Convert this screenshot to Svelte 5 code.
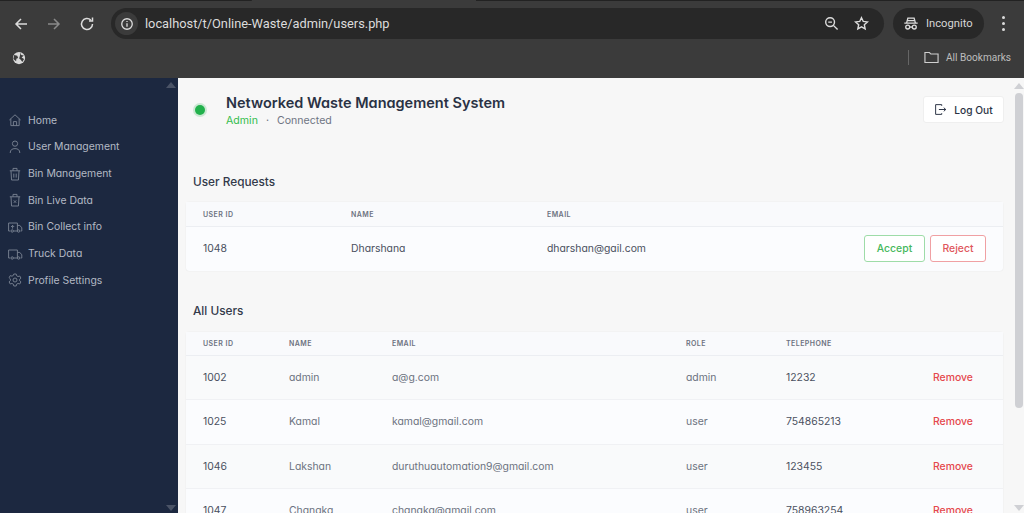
<script>
  const nav = [
    { label: 'Home', d: 'M3 10 10 3.500l7 6.500M4.800 8.500v8.500h10.400V8.500M8 17v-5h4v5' },
    { label: 'User Management', d: 'M10 2.500a3.300 3.300 0 1 0 0 6.600 3.300 3.300 0 0 0 0-6.600M4 17.500c0-4 2.500-5.500 6-5.500s6 1.500 6 5.500' },
    { label: 'Bin Management', d: 'M3.500 6h13M7.500 6V3h5v3M5 6l.7 11.500h8.600L15 6M8.500 9.500v5M11.500 9.500v5' },
    { label: 'Bin Live Data', d: 'M3.500 6h13M7.500 6V3h5v3M5 6l.7 11.500h8.600L15 6M8.500 10.500l3 3M11.500 10.500l-3 3' },
    { label: 'Bin Collect info', d: 'M4 15H2V5h11v10H8M13 8h3l2.500 3v4H17M5 15a1.500 1.500 0 1 0 3 0 1.500 1.500 0 0 0-3 0M13 15a1.500 1.500 0 1 0 3 0 1.500 1.500 0 0 0-3 0M5 10l2-2 2 2M7 8v4' },
    { label: 'Truck Data', d: 'M4 15H2V5h11v10H8M13 8h3l2.500 3v4H17M5 15a1.500 1.500 0 1 0 3 0 1.500 1.500 0 0 0-3 0M13 15a1.500 1.500 0 1 0 3 0 1.500 1.500 0 0 0-3 0' },
    { label: 'Profile Settings', d: 'M10 7.500a2.500 2.500 0 1 0 0 5 2.500 2.500 0 0 0 0-5M8.500 2.500h3l.5 2.200 1.800 1 2.100-.7 1.500 2.600-1.600 1.500v1.800l1.600 1.500-1.500 2.600-2.100-.7-1.800 1-.5 2.200h-3l-.5-2.200-1.800-1-2.100.7-1.500-2.600 1.600-1.500V8.600L2.600 7.100 4.100 4.500l2.100.7 1.800-1z' }
  ];
  const users = [
    ['1002', 'admin', 'a@g.com', 'admin', '12232'],
    ['1025', 'Kamal', 'kamal@gmail.com', 'user', '754865213'],
    ['1046', 'Lakshan', 'duruthuautomation9@gmail.com', 'user', '123455'],
    ['1047', 'Chanaka', 'chanaka@gmail.com', 'user', '758963254']
  ];
</script>

<div class="window">
  <header class="chrome">
    <div class="tabstrip"><span class="tab-a"></span><span class="tab-b"></span></div>
    <div class="toolbar">
      <svg class="tool" viewBox="0 0 16 16"><path d="M14 8H3M8 3 3 8l5 5" /></svg>
      <svg class="tool dim" viewBox="0 0 16 16"><path d="M2 8h11M8 3l5 5-5 5" /></svg>
      <svg class="tool" viewBox="0 0 16 16"><path d="M13.500 8a5.500 5.500 0 1 1-1.700-4M13.500 1.500V5H10" /></svg>
      <div class="omnibox">
        <span class="info"><svg viewBox="0 0 16 16"><circle cx="8" cy="8" r="6" /><path d="M8 7.200v4M8 4.600v1.200" /></svg></span>
        <span class="url">localhost/t/Online-Waste/admin/users.php</span>
        <svg class="zoomi" viewBox="0 0 16 16"><circle cx="6.500" cy="6.500" r="4.700" /><path d="M4.500 6.500h4M10 10l4.500 4.500" /></svg>
        <svg class="star" viewBox="0 0 16 16"><path d="m8 1.800 1.900 4 4.400.5-3.300 3 .9 4.400L8 11.500l-3.900 2.200.9-4.400-3.300-3 4.400-.5z" /></svg>
      </div>
      <div class="incog">
        <svg viewBox="0 0 18 16"><path d="M1.500 7.500h15M4 7.500 5.500 2h7L14 7.500M4.500 4.800h9" /><circle cx="5.300" cy="12" r="2.200" /><circle cx="12.700" cy="12" r="2.200" /><path d="M7.500 12h3" /></svg>
        <span>Incognito</span>
      </div>
      <div class="kebab"><i></i><i></i><i></i></div>
    </div>
    <div class="bookmarks">
      <svg class="globe" viewBox="0 0 16 16"><circle cx="8" cy="8" r="7" fill="#dadada" /><path d="M2.500 4.500 6 5.500 7 8l-2 .8-.3 3L1.500 9zM10 1.800l.5 2.700 3 .5L11 7.500l2.800 1.500-2 3.500L10 10 8.200 8.500z" fill="#3c3c3c" /></svg>
      <span class="spacer"></span>
      <span class="sep"></span>
      <svg class="folder" viewBox="0 0 16 13"><path d="M1 11.800V1.200h4.800l1.500 1.600H15v9z" /></svg>
      <span class="allb">All Bookmarks</span>
    </div>
  </header>

  <div class="body">
    <aside class="side">
      <span class="arrow up side-up"></span>
      <nav>
        {#each nav as item}
          <div class="nav-item">
            <svg viewBox="0 0 20 20"><path d={item.d} /></svg>
            <span>{item.label}</span>
          </div>
        {/each}
      </nav>
      <span class="arrow down side-down"></span>
    </aside>

    <main class="main">
      <div class="head">
        <span class="dot"></span>
        <div class="title">
          <h1>Networked Waste Management System</h1>
          <div class="sub"><span class="green">Admin</span><span class="mid">·</span><span>Connected</span></div>
        </div>
        <button class="logout">
          <svg viewBox="0 0 16 16"><path d="M9.500 3.500V2H2v12h7.500v-1.500M6 8h8.500M12 5.800 14.500 8 12 10.200" /></svg>
          Log Out
        </button>
      </div>

      <h2 class="first">User Requests</h2>
      <section class="card req">
        <div class="row th"><span>USER ID</span><span>NAME</span><span>EMAIL</span><span></span></div>
        <div class="row td">
          <span class="strong">1048</span><span class="strong">Dharshana</span><span class="strong">dharshan@gail.com</span>
          <span class="actions"><button class="btn ok">Accept</button><button class="btn no">Reject</button></span>
        </div>
      </section>

      <h2 class="second">All Users</h2>
      <section class="card all">
        <div class="row th"><span>USER ID</span><span>NAME</span><span>EMAIL</span><span>ROLE</span><span>TELEPHONE</span><span></span></div>
        {#each users as u, i}
          <div class="row td" class:odd={i % 2 === 0}>
            <span class="strong">{u[0]}</span><span>{u[1]}</span><span>{u[2]}</span><span>{u[3]}</span><span class="strong">{u[4]}</span><span class="remove">Remove</span>
          </div>
        {/each}
      </section>
    </main>

    <div class="scroll">
      <span class="arrow up"></span>
      <span class="thumb"></span>
      <span class="arrow down scroll-down"></span>
    </div>
  </div>
</div>

<style>
  :global(body) { margin: 0; background: #3c3c3c; }
  .window { width: 1024px; height: 513px; overflow: hidden; display: flex; flex-direction: column; font-family: Inter, "Liberation Sans", sans-serif; font-feature-settings: "cv11"; }

  .chrome { flex: none; height: 78px; background: #3b3b3b; display: flex; flex-direction: column; font-family: Roboto, sans-serif; font-feature-settings: normal; color: #d6d6d6; }
  .tabstrip { height: 8px; flex: none; display: flex; justify-content: space-between; }
  .tab-a { width: 252px; height: 1px; background: #222; border-radius: 0 0 6px 0; }
  .tab-b { width: 548px; height: 1px; background: #222; margin-left: 0; }
  .toolbar { height: 31px; flex: none; display: flex; align-items: center; padding-left: 13px; }
  .toolbar svg { fill: none; stroke: #dcdcdc; stroke-width: 1.500; }
  .tool { width: 16px; height: 16px; margin-right: 17px; flex: none; }
  .tool.dim { stroke: #8a8a8a; }
  .omnibox { margin-left: -1px; width: 773px; height: 31px; border-radius: 16px; background: #282828; display: flex; align-items: center; padding-left: 4px; box-sizing: border-box; flex: none; }
  .info { width: 23px; height: 23px; border-radius: 50%; background: #3b3b3b; display: flex; align-items: center; justify-content: center; flex: none; }
  .info svg { width: 14px; height: 14px; }
  .url { margin-left: 7px; font-size: 12.800px; color: #dcdcdc; flex: 1; white-space: nowrap; }
  .zoomi { width: 15px; height: 15px; margin-right: 15px; }
  .star { width: 15px; height: 15px; margin-right: 15px; }
  .incog { margin-left: 9px; width: 91px; height: 31px; border-radius: 16px; background: #282828; display: flex; align-items: center; gap: 7px; padding-left: 10px; box-sizing: border-box; font-size: 11.200px; flex: none; }
  .incog svg { width: 16px; height: 15px; }
  .kebab { margin-left: 18px; display: flex; flex-direction: column; gap: 3px; }
  .kebab i { width: 3px; height: 3px; border-radius: 50%; background: #dcdcdc; display: block; }
  .bookmarks { flex: 1; display: flex; align-items: center; padding: 0 13px 2px 12px; }
  .globe { width: 14px; height: 14px; }
  .spacer { flex: 1; }
  .sep { width: 1px; height: 15px; background: #666; margin-right: 15px; }
  .folder { width: 15px; height: 13px; fill: none; stroke: #cfcfcf; stroke-width: 1.200; margin-right: 7px; }
  .allb { font-size: 10.100px; color: #bdbdbd; }

  .body { flex: 1; min-height: 0; display: flex; }
  .side { width: 178px; flex: none; background: #1c2840; position: relative; }
  nav { padding-top: 28.900px; display: flex; flex-direction: column; }
  .nav-item { height: 26.700px; display: flex; align-items: center; gap: 5px; padding-left: 7px; color: #b3b9c4; font-size: 10.400px; }
  .nav-item svg { width: 16px; height: 16px; fill: none; stroke: #76808f; stroke-width: 1.200; flex: none; }
  .arrow { width: 0; height: 0; border-left: 5px solid transparent; border-right: 5px solid transparent; display: block; }
  .arrow.up { border-bottom: 6px solid #cfd0d4; }
  .arrow.down { border-top: 6px solid #cfd0d4; }
  .side-up { position: absolute; top: 4px; right: 2px; border-bottom-color: #4a5366 !important; }
  .side-down { position: absolute; bottom: 2px; right: 2px; border-top-color: #4a5366 !important; }

  .main { flex: 1; min-width: 0; background: #f7f7f7; padding: 0 10px 0 8px; overflow: hidden; }
  .head { display: flex; align-items: flex-start; padding-top: 16px; }
  .dot { width: 10px; height: 10px; margin: 11px 0 0 9px; border-radius: 50%; background: #22b14c; box-shadow: 0 0 0 2px #22b14c33; flex: none; }
  .title { margin-left: 21px; flex: 1; }
  h1 { margin: 0; font-size: 14.500px; line-height: 18px; font-weight: 600; color: #2a3244; }
  .sub { margin-top: 2px; font-size: 10.600px; line-height: 14px; color: #6f7583; display: flex; }
  .green { color: #35bd4d; }
  .mid { margin: 0 8px; }
  .logout { margin-top: 2px; width: 81px; height: 27px; border: 1px solid #efefef; border-radius: 3px; background: #fff; font: 500 10.200px Inter, sans-serif; color: #2a3244; display: flex; align-items: center; justify-content: center; gap: 7px; padding: 0; font-feature-settings: "cv11"; }
  .logout svg { width: 13px; height: 13px; fill: none; stroke: #2a3244; stroke-width: 1.200; }

  h2 { margin: 0 0 0 7px; font-size: 11.800px; line-height: 16px; font-weight: 500; color: #333a4a; }
  .first { margin-top: 46px; }
  .second { margin-top: 32px; }

  .card { background: #fbfcfe; border-radius: 3px; box-shadow: 0 0 1px #d8d8d8; width: 817px; }
  .req { margin-top: 12px; height: 69px; }
  .all { margin-top: 13px; }
  .row { display: grid; align-items: center; padding-left: 17px; }
  .req .row { grid-template-columns: 148px 196px 1fr auto; }
  .all .row { grid-template-columns: 86px 103px 294px 100px 147px 1fr; }
  .th { height: 23px; background: #f9fafc; border-bottom: 1px solid #eceef2; font-size: 7px; font-weight: 600; letter-spacing: .45px; color: #6c7280; }
  .req .th { height: 24px; }
  .td { height: 44.300px; font-size: 10.400px; color: #6c7280; border-bottom: 1px solid #f0f1f4; box-sizing: border-box; }
  .odd { background: #f9fafb; }
  .req .td { height: 43px; border-bottom: 0; }
  .strong { color: #4a5060; }
  .remove { color: #e5484d; font-weight: 500; }
  .actions { display: flex; gap: 5px; padding-right: 17px; }
  .btn { height: 27px; padding: 0; background: #fff; border-radius: 3px; font: 500 10.400px Inter, sans-serif; font-feature-settings: "cv11"; }
  .ok { width: 61px; border: 1px solid #9edca8; color: #46b85c; }
  .no { width: 56px; border: 1px solid #f0a0a3; color: #e0575c; }

  .scroll { width: 10px; flex: none; background: #f7f7f7; position: relative; display: flex; flex-direction: column; align-items: center; }
  .scroll .up { margin-top: 5px; }
  .thumb { width: 8px; height: 315px; margin-top: 4px; border-radius: 4px; background: #cfd0d4; }
  .scroll-down { position: absolute; bottom: 2px; }
</style>
